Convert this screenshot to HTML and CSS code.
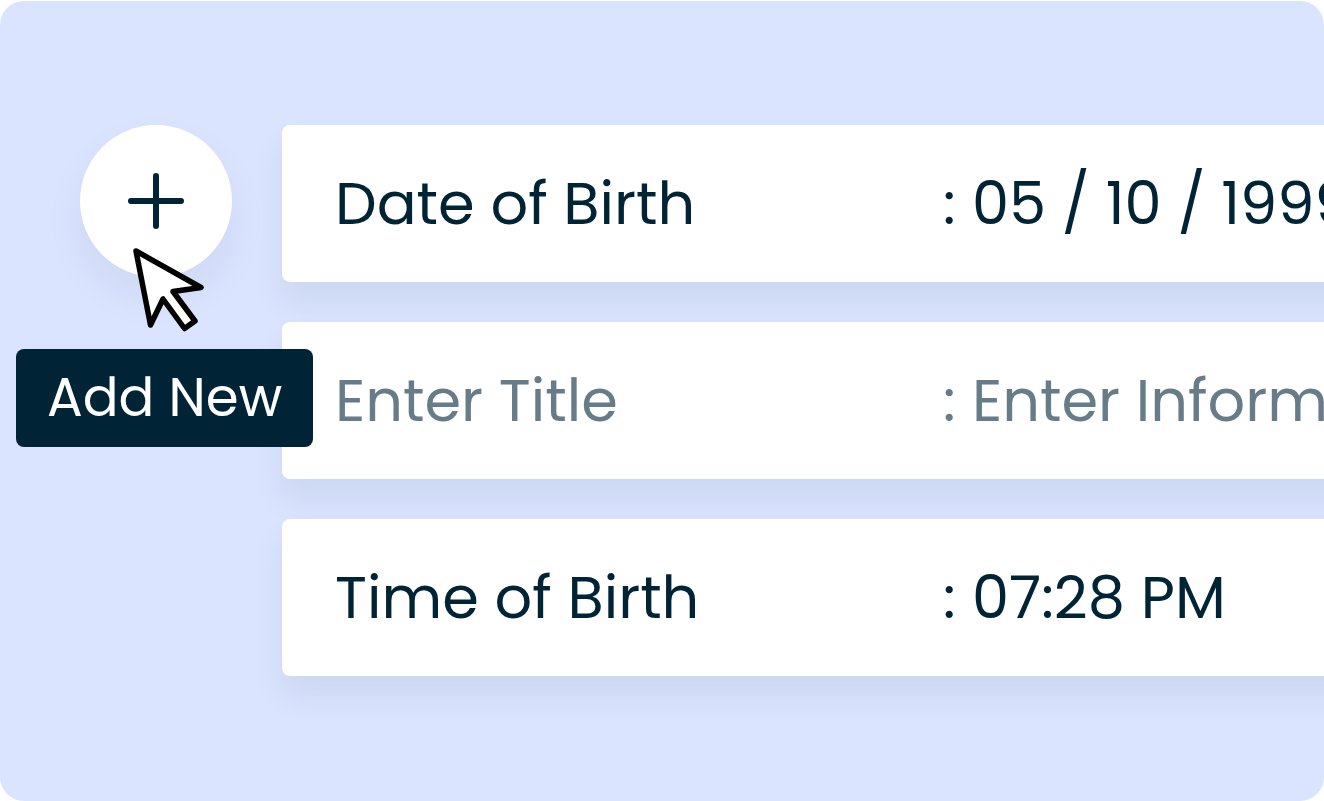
FILE: index.html
```html
<!DOCTYPE html>
<html lang="en">

<head>
    <meta charset="UTF-8">
    <meta name="viewport" content="width=device-width, initial-scale=1.0">
    <title>Add New Field</title>
    <link rel="stylesheet" href="styles.css">
</head>

<body>
    <main class="panel">
        <div class="add">
            <button class="add-btn" type="button" aria-labelledby="addTooltip">
                <svg class="plus" viewBox="0 0 56 56" aria-hidden="true">
                    <path d="M28 3V53M3 28H53" />
                </svg>
            </button>
            <svg class="cursor" viewBox="0 0 76 88" aria-hidden="true">
                <path d="M4 5L69 41.500L41 45.500L63 75L52.500 82.500L31 53L18.500 79Z" />
            </svg>
            <div class="tooltip" id="addTooltip" role="tooltip">Add New</div>
        </div>

        <div class="rows">
            <div class="row">
                <span class="title">Date of Birth</span>
                <span class="colon">:</span>
                <span class="info">05 / 10 / 1999</span>
            </div>
            <div class="row">
                <input class="title" type="text" placeholder="Enter Title" aria-label="Title">
                <span class="colon muted">:</span>
                <input class="info" type="text" placeholder="Enter Information" aria-label="Information">
            </div>
            <div class="row">
                <span class="title">Time of Birth</span>
                <span class="colon">:</span>
                <span class="info">07:28 PM</span>
            </div>
        </div>
    </main>
</body>

</html>
```
FILE: styles.css
```css
* {
    box-sizing: border-box;
}

body {
    font-family: Poppins, Inter, sans-serif;
    color: #002436;
    background-color: #fff;
    margin: 0;
    padding-top: 1px;
    min-height: 100vh;
    display: flex;
}

.panel {
    flex: 1;
    min-width: 0;
    display: flex;
    align-items: flex-start;
    gap: 50px;
    padding: 124px 0 124px 80px;
    background-color: #dae4ff;
    border-radius: 24px;
    overflow: hidden;
}

.add {
    position: relative;
    flex: none;
    z-index: 1;
}

.add-btn {
    display: flex;
    justify-content: center;
    align-items: center;
    width: 152px;
    height: 152px;
    padding: 0;
    border: none;
    border-radius: 50%;
    background-color: #fff;
    box-shadow: 0 20px 40px rgba(0, 36, 54, 0.06);
    cursor: pointer;
}

.plus {
    width: 56px;
    height: 56px;
    fill: none;
    stroke: #002436;
    stroke-width: 6;
    stroke-linecap: round;
}

.cursor {
    position: absolute;
    top: 121px;
    left: 52px;
    width: 76px;
    height: 88px;
    fill: #fff;
    stroke: #000;
    stroke-width: 5.5;
    stroke-linejoin: round;
    pointer-events: none;
}

.tooltip {
    position: absolute;
    top: 224px;
    left: -64px;
    padding: 16px 31px;
    border-radius: 8px;
    background-color: #002436;
    color: #fff;
    font-size: 53px;
    line-height: 66px;
    white-space: nowrap;
}

/* rows run past the right edge of the panel */
.rows {
    flex: 1;
    min-width: 0;
    display: flex;
    flex-direction: column;
    gap: 40px;
    margin-right: -60px;
}

.row {
    display: flex;
    align-items: center;
    height: 157px;
    padding-left: 53px;
    border-radius: 8px;
    background-color: #fff;
    box-shadow: 0 20px 32px rgba(0, 36, 54, 0.07);
    font-size: 59px;
    white-space: nowrap;
}

.title {
    flex: none;
    width: 608px;
}

.colon {
    flex: none;
    width: 29px;
}

.info {
    flex: 1;
    min-width: 0;
}

.row input {
    padding: 0;
    border: none;
    background: none;
    color: inherit;
    font: inherit;
}

.row input::placeholder,
.muted {
    color: #667c89;
    opacity: 1;
}
```
